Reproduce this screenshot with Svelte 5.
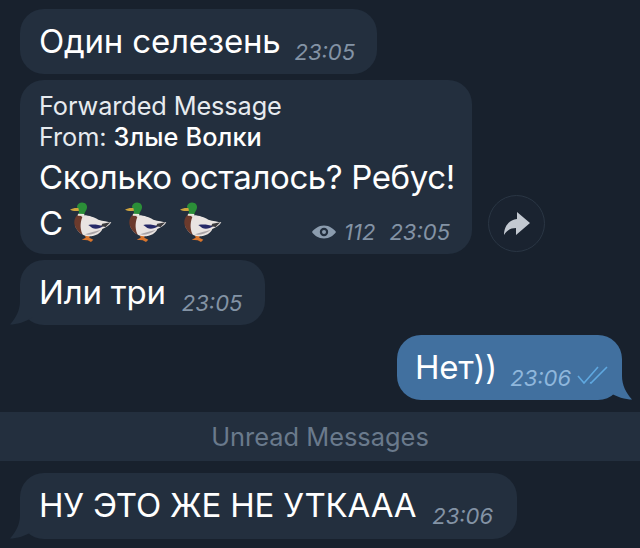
<script>
  const ducks = [0, 1, 2];
</script>

{#snippet tail()}
  <svg class="tail" width="24" height="24" viewBox="0 0 24 24"><path d="M11 0 C11 9 7 17 1 23.500 C7 23.500 17 21 24 16 L24 0 Z" fill="currentColor"/></svg>
{/snippet}

{#snippet duck()}
  <svg class="duck" width="44" height="44" viewBox="12 12 132 132">
    <path d="M58 110 L62 122 L50 128 L68 130 L78 135 L85 128 L73 122 L75 110 Z" fill="#d9752c"/>
    <path d="M42 58 C60 50 85 60 100 68 C115 72 128 74 139 76 C134 86 122 92 112 96 C108 108 92 118 72 118 C50 118 34 100 30 85 Z" fill="#e9e4e1"/>
    <path d="M60 112 C72 116 92 110 108 98 C96 102 76 106 60 112 Z" fill="#a9a3a6"/>
    <path d="M40 52 C28 60 24 78 32 92 C36 100 46 110 54 114 C46 100 44 80 52 60 Z" fill="#6b3a2c"/>
    <path d="M70 84 C85 81 100 83 114 88 C106 95 90 97 82 93 Z" fill="#262a68"/>
    <path d="M112 80 L136 76 L122 90 L108 88 Z" fill="#3a3a3e"/>
    <path d="M36 28 C38 18 50 14 58 18 C68 22 68 34 62 42 C58 48 58 52 57 56 L40 54 C44 48 42 42 38 38 Z" fill="#2b8f38"/>
    <path d="M39 50 L58 51 L57 57 L38 56 Z" fill="#ece8e0"/>
    <path d="M15 38 C22 33 32 32 40 33 L42 41 C32 43 22 42 15 38 Z" fill="#cfa43e"/>
  </svg>
{/snippet}

<main class="chat">
  <div class="row in-row">
    <div class="bubble in one">
      <span class="text">Один селезень</span>
      <span class="time">23:05</span>
    </div>
  </div>

  <div class="row in-row fwd-row">
    <div class="bubble in fwd">
      <div class="fwd-head">Forwarded Message</div>
      <div class="fwd-head">From: <span class="author">Злые Волки</span></div>
      <div class="text fwd-text">Сколько осталось? Ребус!</div>
      <div class="fwd-last">
        <span class="text">С</span>
        <span class="ducks">
          {#each ducks as d (d)}
            {@render duck()}
          {/each}
        </span>
        <span class="meta">
          <svg width="26" height="16" viewBox="0 0 26 16"><path fill-rule="evenodd" d="M13 1.500C7.500 1.500 3 5 1 8c2 3 6.500 6.500 12 6.500S23 11 25 8c-2-3-6.500-6.500-12-6.500ZM13 3.800a4.200 4.200 0 1 1 0 8.400a4.200 4.200 0 0 1 0-8.400ZM13 6a2 2 0 1 0 0 4a2 2 0 0 0 0-4Z" fill="#8b9cae"/></svg>
          <span class="time">112</span>
          <span class="time gap">23:05</span>
        </span>
      </div>
    </div>
    <button class="share" aria-label="Share">
      <svg width="28" height="24" viewBox="0 0 28 24"><path d="M14 0 L27 11 L13 23 L13 16 C8 16 4 18 1 23 C1 14 6 8 14 7 Z" fill="#c3c9d1"/></svg>
    </button>
  </div>

  <div class="row in-row">
    <div class="bubble in tailed three">
      {@render tail()}
      <span class="text">Или три</span>
      <span class="time">23:05</span>
    </div>
  </div>

  <div class="row out-row">
    <div class="bubble out tailed">
      {@render tail()}
      <span class="text">Нет))</span>
      <span class="time">23:06</span>
      <svg class="checks" width="32" height="20" viewBox="0 0 32 20" fill="none" stroke="#5fa8e0" stroke-width="1.600"><path d="M1 11 L7 18 L21 2"/><path d="M13 17.500 L14 18 L30 2"/></svg>
    </div>
  </div>

  <div class="unread">Unread Messages</div>

  <div class="row in-row">
    <div class="bubble in tailed last">
      {@render tail()}
      <span class="text">НУ ЭТО ЖЕ НЕ УТКААА</span>
      <span class="time">23:06</span>
    </div>
  </div>
</main>

<style>
  :global(body) {
    margin: 0;
    background: #18212d;
  }
  .chat {
    width: 640px;
    height: 548px;
    box-sizing: border-box;
    padding-top: 9px;
    overflow: hidden;
    display: flex;
    flex-direction: column;
    background: #18212d;
    font-family: Inter, Roboto, "Noto Sans", sans-serif;
    color: #fff;
  }
  .row {
    display: flex;
    align-items: center;
    margin-bottom: 6px;
  }
  .in-row { padding-left: 20px; }
  .out-row {
    justify-content: flex-end;
    padding-right: 18px;
    margin-top: 4px;
    margin-bottom: 12px;
  }
  .bubble {
    position: relative;
    box-sizing: border-box;
    height: 65px;
    padding: 0 22px 0 19px;
    border-radius: 24px;
    display: flex;
    align-items: baseline;
    line-height: 65px;
  }
  .in { background: #232f3e; color: #232f3e; }
  .out { background: #41709f; color: #41709f; padding: 0 12px 0 18px; }
  .text {
    font-size: 33px;
    color: #fff;
    letter-spacing: -0.2px;
    white-space: nowrap;
  }
  .time {
    font-size: 22px;
    font-style: italic;
    color: #8393a5;
    margin-left: 16px;
    position: relative;
    top: 7px;
    white-space: nowrap;
  }
  .one { width: 357px; }
  .one .time { margin-left: 14px; }
  .three { width: 245px; }
  .last { width: 497px; height: 66px; }
  .out { width: 225px; }
  .out .time { color: #8fb7dc; margin-left: 13px; }
  .checks { flex: none; position: relative; top: 7px; margin-left: 6px; align-self: center; }
  .tail {
    position: absolute;
    left: -11px;
    bottom: 0;
  }
  .out .tail {
    left: auto;
    right: -11px;
    transform: scaleX(-1);
  }
  .fwd {
    display: block;
    width: 452px;
    height: 174px;
    padding-top: 10px;
    line-height: normal;
    flex: none;
  }
  .fwd-head {
    font-size: 25.300px;
    line-height: 31px;
    color: #e7ebef;
    letter-spacing: -0.1px;
    white-space: nowrap;
  }
  .author { color: #fff; font-weight: 500; letter-spacing: 0.1px; }
  .fwd-text { line-height: 40px; margin-top: 5px; letter-spacing: -0.4px; }
  .fwd-last {
    display: flex;
    align-items: center;
    height: 40px;
    margin-top: 6px;
  }
  .ducks {
    display: flex;
    gap: 11px;
    margin-left: 6px;
  }
  .meta {
    margin-left: auto;
    display: flex;
    align-items: center;
    margin-top: 18px;
  }
  .meta .time { top: 0; margin-left: 7px; }
  .meta .time.gap { margin-left: 14px; }
  .fwd-row { align-items: flex-end; }
  .share {
    width: 57px;
    height: 57px;
    box-sizing: border-box;
    margin: 0 0 2px 16px;
    padding: 0;
    border-radius: 50%;
    border: 1px solid #2a3644;
    background: #1a2330;
    display: flex;
    align-items: center;
    justify-content: center;
  }
  .unread {
    height: 49px;
    line-height: 49px;
    background: #232f3e;
    text-align: center;
    font-size: 25.400px;
    color: #6a7a8c;
    margin-bottom: 12px;
    flex: none;
  }
</style>
